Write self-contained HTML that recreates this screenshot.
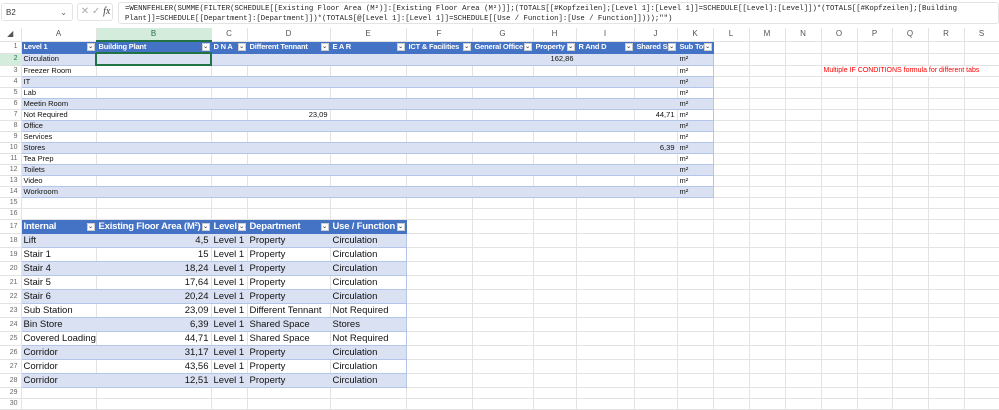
<!DOCTYPE html>
<html><head><meta charset="utf-8"><style>
body{margin:0;width:999px;height:409px;overflow:hidden;background:#fff;font-family:"Liberation Sans",sans-serif;position:relative}
#fb{position:absolute;left:0;top:0;width:999px;height:28px;background:#fff;border-bottom:1px solid #e0e0e0}
#nb{position:absolute;left:1px;top:3px;width:72px;height:18px;border:1px solid #e3e3e3;border-radius:3px;font-size:8px;color:#333;line-height:18px;padding-left:4px;box-sizing:border-box}
#nb span{position:absolute;right:5px;top:0;color:#666}
#ic{position:absolute;left:77px;top:3px;width:36px;height:18px;border:1px solid #e3e3e3;border-radius:3px;box-sizing:border-box;font-size:10px;color:#aaa;line-height:16px}
#fx{position:absolute;left:118px;top:2px;width:881px;height:22px;border:1px solid #e3e3e3;border-radius:3px;box-sizing:border-box;font-family:"Liberation Mono",monospace;font-size:7.3px;line-height:10px;padding:1px 0 0 6px;color:#222;white-space:pre;overflow:hidden}
table{position:absolute;left:0;top:28px;border-collapse:collapse;table-layout:fixed;width:999px}
td{border-right:1px solid #e3e3e3;border-bottom:1px solid #e3e3e3;padding:0 2px;font-size:7.5px;white-space:nowrap;overflow:hidden;height:10px;line-height:10px;color:#111}
tr.h td{height:12px;text-align:center;color:#555;font-size:8px;background:#fff}
td.n{text-align:right;color:#666;font-size:7px;padding-right:3px}
.t{background:#4472c4;color:#fff;font-weight:bold;border-right:1px solid #4472c4;border-bottom:1px solid #4472c4;position:relative;letter-spacing:-0.2px}
.t i{position:absolute;right:1px;top:1px;width:8px;height:8px;background:#fff;border:1px solid #ccc;box-sizing:border-box;font-style:normal;color:#555;font-size:6px;line-height:6px;text-align:center}
.b{background:#d9e1f2;border-bottom:1px solid #b4c6e7;border-right-color:#d9e1f2}
.w{background:#fff;border-bottom:1px solid #b4c6e7}
.r{text-align:right}
tr.big td{height:13px;line-height:13px;font-size:9.5px}
tr.big .t{font-size:9.5px;font-weight:bold}
tr.big td.n{font-size:7px}
tr.big .t i{top:3px}
.rb{border-right:1px solid #b4c6e7 !important}
</style></head><body>
<div id="fb">
<div id="nb">B2<span>⌄</span></div>
<div id="ic">&nbsp;✕ ✓ <i style="color:#444;font-family:'Liberation Serif',serif">fx</i></div>
<div id="fx">=WENNFEHLER(SUMME(FILTER(SCHEDULE[[Existing Floor Area (M²)]:[Existing Floor Area (M²)]];(TOTALS[[#Kopfzeilen];[Level 1]:[Level 1]]=SCHEDULE[[Level]:[Level]])*(TOTALS[[#Kopfzeilen];[Building
Plant]]=SCHEDULE[[Department]:[Department]])*(TOTALS[@[Level 1]:[Level 1]]=SCHEDULE[[Use / Function]:[Use / Function]])));"")</div>
</div>
<table>
<colgroup><col style="width:21px"><col style="width:75px"><col style="width:115px"><col style="width:36px"><col style="width:83px"><col style="width:76px"><col style="width:66px"><col style="width:61px"><col style="width:43px"><col style="width:58px"><col style="width:43px"><col style="width:36px"><col style="width:36px"><col style="width:36px"><col style="width:36px"><col style="width:36px"><col style="width:35px"><col style="width:36px"><col style="width:36px"><col style="width:35px"></colgroup>
<tr class="h"><td>◢</td><td>A</td><td style="background:#d3ecdc;color:#217346;border-bottom:2px solid #217346">B</td><td>C</td><td>D</td><td>E</td><td>F</td><td>G</td><td>H</td><td>I</td><td>J</td><td>K</td><td>L</td><td>M</td><td>N</td><td>O</td><td>P</td><td>Q</td><td>R</td><td>S</td></tr>
<tr><td class="n">1</td><td class="t">Level 1<i>⌄</i></td><td class="t">Building Plant<i>⌄</i></td><td class="t">D N A<i>⌄</i></td><td class="t">Different Tennant<i>⌄</i></td><td class="t">E A R<i>⌄</i></td><td class="t">ICT &amp; Facilities<i>⌄</i></td><td class="t">General Office<i>⌄</i></td><td class="t">Property<i>⌄</i></td><td class="t">R And D<i>⌄</i></td><td class="t">Shared Sp<i>⌄</i></td><td class="t">Sub Tot<i>⌄</i></td><td></td><td></td><td></td><td></td><td></td><td></td><td></td><td></td></tr>
<tr><td class="n" style="background:#d3ecdc;color:#217346">2</td><td class="b">Circulation</td><td class="b" style="border:2px solid #217346"></td><td class="b"></td><td class="b"></td><td class="b"></td><td class="b"></td><td class="b"></td><td class="b r">162,86</td><td class="b"></td><td class="b"></td><td class="b rb">m²</td><td></td><td></td><td></td><td></td><td></td><td></td><td></td><td></td></tr>
<tr><td class="n">3</td><td class="w">Freezer Room</td><td class="w"></td><td class="w"></td><td class="w"></td><td class="w"></td><td class="w"></td><td class="w"></td><td class="w"></td><td class="w"></td><td class="w"></td><td class="w rb">m²</td><td></td><td></td><td></td><td colspan="5" style="color:#ff0000;border-right:none;font-size:7px">Multiple IF CONDITIONS formula for different tabs</td></tr>
<tr><td class="n">4</td><td class="b">IT</td><td class="b"></td><td class="b"></td><td class="b"></td><td class="b"></td><td class="b"></td><td class="b"></td><td class="b"></td><td class="b"></td><td class="b"></td><td class="b rb">m²</td><td></td><td></td><td></td><td></td><td></td><td></td><td></td><td></td></tr>
<tr><td class="n">5</td><td class="w">Lab</td><td class="w"></td><td class="w"></td><td class="w"></td><td class="w"></td><td class="w"></td><td class="w"></td><td class="w"></td><td class="w"></td><td class="w"></td><td class="w rb">m²</td><td></td><td></td><td></td><td></td><td></td><td></td><td></td><td></td></tr>
<tr><td class="n">6</td><td class="b">Meetin Room</td><td class="b"></td><td class="b"></td><td class="b"></td><td class="b"></td><td class="b"></td><td class="b"></td><td class="b"></td><td class="b"></td><td class="b"></td><td class="b rb">m²</td><td></td><td></td><td></td><td></td><td></td><td></td><td></td><td></td></tr>
<tr><td class="n">7</td><td class="w">Not Required</td><td class="w"></td><td class="w"></td><td class="w r">23,09</td><td class="w"></td><td class="w"></td><td class="w"></td><td class="w"></td><td class="w"></td><td class="w r">44,71</td><td class="w rb">m²</td><td></td><td></td><td></td><td></td><td></td><td></td><td></td><td></td></tr>
<tr><td class="n">8</td><td class="b">Office</td><td class="b"></td><td class="b"></td><td class="b"></td><td class="b"></td><td class="b"></td><td class="b"></td><td class="b"></td><td class="b"></td><td class="b"></td><td class="b rb">m²</td><td></td><td></td><td></td><td></td><td></td><td></td><td></td><td></td></tr>
<tr><td class="n">9</td><td class="w">Services</td><td class="w"></td><td class="w"></td><td class="w"></td><td class="w"></td><td class="w"></td><td class="w"></td><td class="w"></td><td class="w"></td><td class="w"></td><td class="w rb">m²</td><td></td><td></td><td></td><td></td><td></td><td></td><td></td><td></td></tr>
<tr><td class="n">10</td><td class="b">Stores</td><td class="b"></td><td class="b"></td><td class="b"></td><td class="b"></td><td class="b"></td><td class="b"></td><td class="b"></td><td class="b"></td><td class="b r">6,39</td><td class="b rb">m²</td><td></td><td></td><td></td><td></td><td></td><td></td><td></td><td></td></tr>
<tr><td class="n">11</td><td class="w">Tea Prep</td><td class="w"></td><td class="w"></td><td class="w"></td><td class="w"></td><td class="w"></td><td class="w"></td><td class="w"></td><td class="w"></td><td class="w"></td><td class="w rb">m²</td><td></td><td></td><td></td><td></td><td></td><td></td><td></td><td></td></tr>
<tr><td class="n">12</td><td class="b">Toilets</td><td class="b"></td><td class="b"></td><td class="b"></td><td class="b"></td><td class="b"></td><td class="b"></td><td class="b"></td><td class="b"></td><td class="b"></td><td class="b rb">m²</td><td></td><td></td><td></td><td></td><td></td><td></td><td></td><td></td></tr>
<tr><td class="n">13</td><td class="w">Video</td><td class="w"></td><td class="w"></td><td class="w"></td><td class="w"></td><td class="w"></td><td class="w"></td><td class="w"></td><td class="w"></td><td class="w"></td><td class="w rb">m²</td><td></td><td></td><td></td><td></td><td></td><td></td><td></td><td></td></tr>
<tr><td class="n">14</td><td class="b">Workroom</td><td class="b"></td><td class="b"></td><td class="b"></td><td class="b"></td><td class="b"></td><td class="b"></td><td class="b"></td><td class="b"></td><td class="b"></td><td class="b rb">m²</td><td></td><td></td><td></td><td></td><td></td><td></td><td></td><td></td></tr>
<tr><td class="n">15</td><td></td><td></td><td></td><td></td><td></td><td></td><td></td><td></td><td></td><td></td><td></td><td></td><td></td><td></td><td></td><td></td><td></td><td></td><td></td></tr>
<tr><td class="n">16</td><td></td><td></td><td></td><td></td><td></td><td></td><td></td><td></td><td></td><td></td><td></td><td></td><td></td><td></td><td></td><td></td><td></td><td></td><td></td></tr>
<tr class="big"><td class="n">17</td><td class="t">Internal<i>⌄</i></td><td class="t">Existing Floor Area (M²)<i>⌄</i></td><td class="t">Level<i>⌄</i></td><td class="t">Department<i>⌄</i></td><td class="t">Use / Function<i>⌄</i></td><td></td><td></td><td></td><td></td><td></td><td></td><td></td><td></td><td></td><td></td><td></td><td></td><td></td><td></td></tr>
<tr class="big"><td class="n">18</td><td class="b">Lift</td><td class="b r">4,5</td><td class="b">Level 1</td><td class="b">Property</td><td class="b rb">Circulation</td><td></td><td></td><td></td><td></td><td></td><td></td><td></td><td></td><td></td><td></td><td></td><td></td><td></td><td></td></tr>
<tr class="big"><td class="n">19</td><td class="w">Stair 1</td><td class="w r">15</td><td class="w">Level 1</td><td class="w">Property</td><td class="w rb">Circulation</td><td></td><td></td><td></td><td></td><td></td><td></td><td></td><td></td><td></td><td></td><td></td><td></td><td></td><td></td></tr>
<tr class="big"><td class="n">20</td><td class="b">Stair 4</td><td class="b r">18,24</td><td class="b">Level 1</td><td class="b">Property</td><td class="b rb">Circulation</td><td></td><td></td><td></td><td></td><td></td><td></td><td></td><td></td><td></td><td></td><td></td><td></td><td></td><td></td></tr>
<tr class="big"><td class="n">21</td><td class="w">Stair 5</td><td class="w r">17,64</td><td class="w">Level 1</td><td class="w">Property</td><td class="w rb">Circulation</td><td></td><td></td><td></td><td></td><td></td><td></td><td></td><td></td><td></td><td></td><td></td><td></td><td></td><td></td></tr>
<tr class="big"><td class="n">22</td><td class="b">Stair 6</td><td class="b r">20,24</td><td class="b">Level 1</td><td class="b">Property</td><td class="b rb">Circulation</td><td></td><td></td><td></td><td></td><td></td><td></td><td></td><td></td><td></td><td></td><td></td><td></td><td></td><td></td></tr>
<tr class="big"><td class="n">23</td><td class="w">Sub Station</td><td class="w r">23,09</td><td class="w">Level 1</td><td class="w">Different Tennant</td><td class="w rb">Not Required</td><td></td><td></td><td></td><td></td><td></td><td></td><td></td><td></td><td></td><td></td><td></td><td></td><td></td><td></td></tr>
<tr class="big"><td class="n">24</td><td class="b">Bin Store</td><td class="b r">6,39</td><td class="b">Level 1</td><td class="b">Shared Space</td><td class="b rb">Stores</td><td></td><td></td><td></td><td></td><td></td><td></td><td></td><td></td><td></td><td></td><td></td><td></td><td></td><td></td></tr>
<tr class="big"><td class="n">25</td><td class="w">Covered Loading</td><td class="w r">44,71</td><td class="w">Level 1</td><td class="w">Shared Space</td><td class="w rb">Not Required</td><td></td><td></td><td></td><td></td><td></td><td></td><td></td><td></td><td></td><td></td><td></td><td></td><td></td><td></td></tr>
<tr class="big"><td class="n">26</td><td class="b">Corridor</td><td class="b r">31,17</td><td class="b">Level 1</td><td class="b">Property</td><td class="b rb">Circulation</td><td></td><td></td><td></td><td></td><td></td><td></td><td></td><td></td><td></td><td></td><td></td><td></td><td></td><td></td></tr>
<tr class="big"><td class="n">27</td><td class="w">Corridor</td><td class="w r">43,56</td><td class="w">Level 1</td><td class="w">Property</td><td class="w rb">Circulation</td><td></td><td></td><td></td><td></td><td></td><td></td><td></td><td></td><td></td><td></td><td></td><td></td><td></td><td></td></tr>
<tr class="big"><td class="n">28</td><td class="b">Corridor</td><td class="b r">12,51</td><td class="b">Level 1</td><td class="b">Property</td><td class="b rb">Circulation</td><td></td><td></td><td></td><td></td><td></td><td></td><td></td><td></td><td></td><td></td><td></td><td></td><td></td><td></td></tr>
<tr><td class="n">29</td><td></td><td></td><td></td><td></td><td></td><td></td><td></td><td></td><td></td><td></td><td></td><td></td><td></td><td></td><td></td><td></td><td></td><td></td><td></td></tr>
<tr><td class="n">30</td><td></td><td></td><td></td><td></td><td></td><td></td><td></td><td></td><td></td><td></td><td></td><td></td><td></td><td></td><td></td><td></td><td></td><td></td><td></td></tr>
</table>
</body></html>
